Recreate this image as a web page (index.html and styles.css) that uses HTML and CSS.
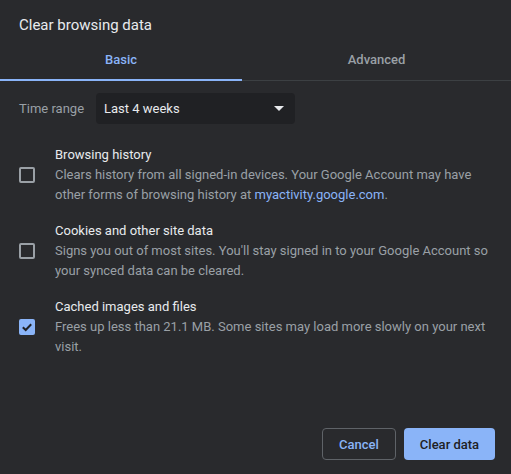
FILE: index.html
```html
<!DOCTYPE html>
<html>
<head>
<meta charset="utf-8">
<link rel="stylesheet" href="styles.css">
</head>
<body>
<div class="dialog">
  <div class="title">Clear browsing data</div>
  <div class="tabs">
    <div class="tab active">Basic</div>
    <div class="tab">Advanced</div>
  </div>
  <div class="content">
    <div class="range-row">
      <span class="range-label">Time range</span>
      <div class="select">
        <span>Last 4 weeks</span>
        <svg class="arrow" width="10" height="5" viewBox="0 0 10 5"><path d="M0 0 L10 0 L5 5 Z" fill="#e8eaed"/></svg>
      </div>
    </div>
    <div class="items">
      <div class="item">
        <div class="box"></div>
        <div class="text">
          <div class="item-title">Browsing history</div>
          <div class="desc">Clears history from all signed-in devices. Your Google Account may have other forms of browsing history at <a class="link">myactivity.google.com</a>.</div>
        </div>
      </div>
      <div class="item">
        <div class="box"></div>
        <div class="text">
          <div class="item-title">Cookies and other site data</div>
          <div class="desc">Signs you out of most sites. You'll stay signed in to your Google Account so your synced data can be cleared.</div>
        </div>
      </div>
      <div class="item">
        <div class="box checked">
          <svg width="12" height="12" viewBox="0 0 12 12"><path d="M1.8 6.2 L4.7 9 L10.2 3.2" fill="none" stroke="#202124" stroke-width="2"/></svg>
        </div>
        <div class="text">
          <div class="item-title">Cached images and files</div>
          <div class="desc">Frees up less than 21.1 MB. Some sites may load more slowly on your next visit.</div>
        </div>
      </div>
    </div>
  </div>
  <div class="buttons">
    <button class="btn cancel">Cancel</button>
    <button class="btn primary">Clear data</button>
  </div>
</div>
</body>
</html>
```
FILE: styles.css
```css
html, body {
  margin: 0;
  padding: 0;
  background: #292a2d;
}
body {
  font-family: Roboto, "Liberation Sans", sans-serif;
  color: #e8eaed;
}
.dialog {
  width: 511px;
  height: 474px;
  display: flex;
  flex-direction: column;
  box-sizing: border-box;
}
.title {
  font-size: 15px;
  line-height: 20px;
  padding: 15px 19px 0;
  height: 25px;
}
.tabs {
  display: flex;
  height: 41px;
  border-bottom: 1px solid #3c4043;
  box-sizing: border-box;
}
.tab {
  flex: 1;
  display: flex;
  align-items: center;
  justify-content: center;
  font-size: 13px;
  font-weight: 500;
  color: #9aa0a6;
  box-sizing: border-box;
  padding-bottom: 2px;
}
.tab.active {
  flex: 0 0 242px;
  color: #8ab4f8;
  border-bottom: 2px solid #8ab4f8;
  margin-bottom: -1px;
  padding-bottom: 0;
}
.content {
  padding: 12px 19px 0;
}
.range-row {
  display: flex;
  align-items: center;
}
.range-label {
  width: 77px;
  font-size: 13px;
  color: #9aa0a6;
}
.select {
  width: 199px;
  height: 31px;
  background: #202124;
  border-radius: 4px;
  display: flex;
  align-items: center;
  justify-content: space-between;
  padding: 0 8px;
  box-sizing: border-box;
  font-size: 13px;
  color: #e8eaed;
}
.arrow {
  margin-right: 3px;
}
.items {
  margin-top: 21px;
  display: flex;
  flex-direction: column;
  gap: 16px;
}
.item {
  display: flex;
  align-items: center;
}
.box {
  width: 16px;
  height: 16px;
  box-sizing: border-box;
  border: 2px solid #9aa0a6;
  border-radius: 2px;
  margin-right: 20px;
  flex: none;
  display: flex;
  align-items: center;
  justify-content: center;
}
.box.checked {
  background: #8ab4f8;
  border-color: #8ab4f8;
}
.text {
  flex: 1;
}
.item-title {
  font-size: 13px;
  line-height: 20px;
  color: #e8eaed;
}
.desc {
  font-size: 13px;
  line-height: 20px;
  color: #9aa0a6;
}
.link {
  color: #8ab4f8;
}
.buttons {
  margin-top: auto;
  display: flex;
  justify-content: flex-end;
  gap: 8px;
  padding: 0 16px 14px;
}
.btn {
  height: 32px;
  border-radius: 4px;
  font-family: Roboto, "Liberation Sans", sans-serif;
  font-size: 13px;
  font-weight: 500;
  padding: 0;
  box-sizing: border-box;
}
.cancel {
  width: 74px;
  background: transparent;
  border: 1px solid #5f6368;
  color: #8ab4f8;
}
.primary {
  width: 91px;
  background: #8ab4f8;
  border: none;
  color: #202124;
}
```
